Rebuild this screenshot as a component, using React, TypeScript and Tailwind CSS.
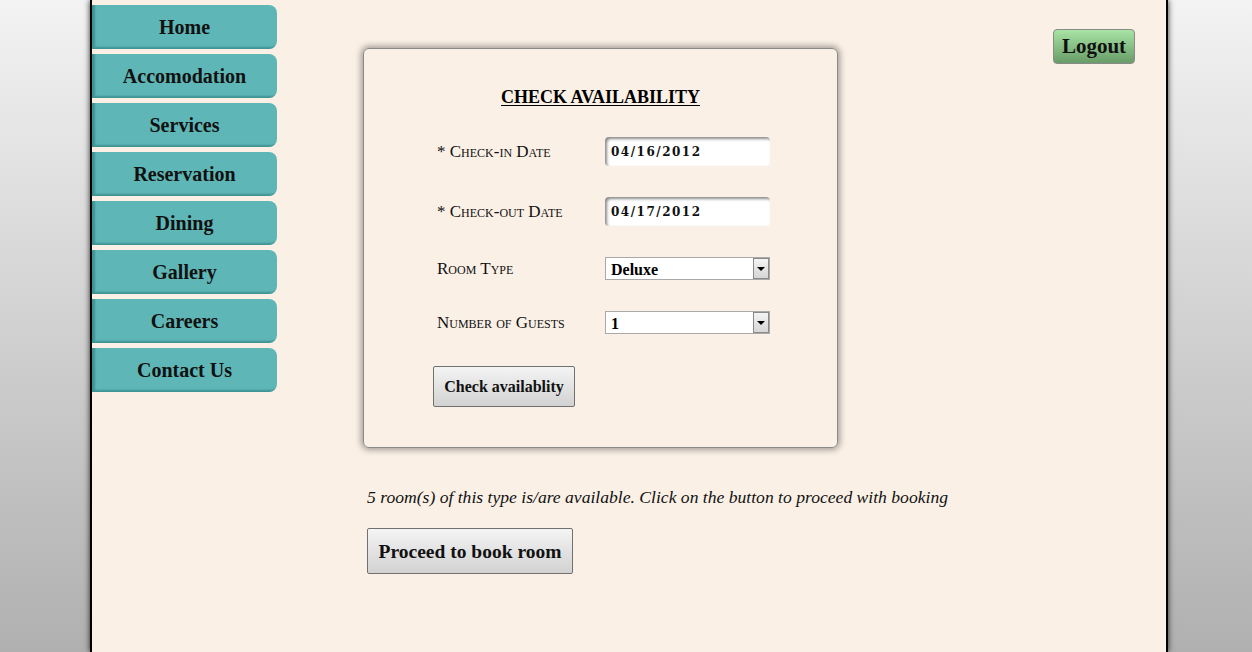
const navItems = [
  "Home",
  "Accomodation",
  "Services",
  "Reservation",
  "Dining",
  "Gallery",
  "Careers",
  "Contact Us",
];

const serif = "font-['Liberation_Serif','Times_New_Roman',serif]";

const SelectBox = ({ value, options }: { value: string; options: string[] }) => (
  <div className="relative w-[165px] h-[23px]">
    <select
      defaultValue={value}
      className={`${serif} appearance-none w-full h-full bg-white border border-[#a9a9a9] pl-[5px] text-[16px] font-bold text-black outline-none`}
    >
      {options.map((o) => (
        <option key={o}>{o}</option>
      ))}
    </select>
    {/* dropdown arrow box */}
    <div className="pointer-events-none absolute right-[1px] top-[1px] w-[16px] h-[21px] border border-[#8a8a8a] bg-gradient-to-b from-[#f4f4f4] to-[#d6d6d6] flex items-center justify-center">
      <svg width="8" height="4" viewBox="0 0 8 4">
        <path d="M0 0h8L4 4z" fill="#000" />
      </svg>
    </div>
  </div>
);

const DateInput = ({ value }: { value: string }) => (
  <input
    defaultValue={value}
    className="w-[165px] h-[29px] bg-white rounded-[4px] shadow-[inset_2px_2px_3px_#8a8a8a] pl-[6px] pt-[1px] text-[12px] font-bold tracking-[1.5px] font-['DejaVu_Serif',serif] text-[#111] outline-none"
  />
);

const FormRow = ({ label, className = "", children }: { label: string; className?: string; children: React.ReactNode }) => (
  <div className={`flex items-center ${className}`}>
    <span className={`${serif} w-[168px] text-[17px] [font-variant:small-caps] text-[#111]`}>{label}</span>
    {children}
  </div>
);

export default function App() {
  return (
    <div className="min-h-screen h-[652px] bg-gradient-to-b from-[#f3f3f3] to-[#b0b0b0] overflow-hidden">
      <div className="ml-[90px] w-[1078px] h-full bg-[#faf0e6] border-x-2 border-black shadow-[0_0_6px_rgba(0,0,0,0.8)] flex">
        {/* Side navigation */}
        <nav className="w-[185px] pt-[5px] flex flex-col gap-[5px] shrink-0">
          {navItems.map((item) => (
            <a
              key={item}
              href="#"
              className={`${serif} h-[44px] flex items-center justify-center bg-[#5fb6b6] rounded-r-[8px] shadow-[inset_3px_-2px_2px_rgba(0,80,80,0.35)] text-[20px] font-bold text-[#111]`}
            >
              {item}
            </a>
          ))}
        </nav>

        <main className="flex-1 flex">
          <div className="ml-[86px] pt-[48px]">
            {/* Availability card */}
            <div className="w-[475px] h-[400px] rounded-[6px] border border-[#8a8a8a] shadow-[0_0_6px_2px_rgba(0,0,0,0.35)] pt-[38px] pl-[73px]">
              <h2 className={`${serif} text-center pr-[73px] text-[18px] leading-[20px] font-bold underline underline-offset-[2px] text-black`}>
                CHECK AVAILABILITY
              </h2>
              <div className="mt-[30px] flex flex-col">
                <FormRow label="* Check-in Date" className="h-[29px]">
                  <DateInput value="04/16/2012" />
                </FormRow>
                <FormRow label="* Check-out Date" className="h-[29px] mt-[31px]">
                  <DateInput value="04/17/2012" />
                </FormRow>
                <FormRow label="Room Type" className="h-[23px] mt-[31px]">
                  <SelectBox value="Deluxe" options={["Deluxe", "Standard", "Suite"]} />
                </FormRow>
                <FormRow label="Number of Guests" className="h-[23px] mt-[31px]">
                  <SelectBox value="1" options={["1", "2", "3", "4"]} />
                </FormRow>
                <button
                  className={`${serif} -ml-[4px] mt-[32px] w-[142px] h-[41px] rounded-[2px] border border-[#707070] bg-gradient-to-b from-[#f4f4f4] to-[#d2d2d2] text-[16px] font-bold text-[#111]`}
                >
                  Check availablity
                </button>
              </div>
            </div>

            <p className={`${serif} mt-[36px] ml-[4px] text-[17.6px] italic text-[#111] whitespace-nowrap`}>
              5 room(s) of this type is/are available. Click on the button to proceed with booking
            </p>
            <button
              className={`${serif} mt-[18px] ml-[4px] w-[206px] h-[46px] rounded-[2px] border border-[#707070] bg-gradient-to-b from-[#f4f4f4] to-[#d2d2d2] text-[19.5px] font-bold text-[#111]`}
            >
              Proceed to book room
            </button>
          </div>

          <div className="ml-auto mr-[31px] mt-[29px]">
            <button
              className={`${serif} w-[82px] h-[35px] pt-[1px] rounded-[4px] border border-[#8a8a8a] bg-gradient-to-b from-[#a8e4a4] to-[#689c68] text-[21px] font-bold text-[#111]`}
            >
              Logout
            </button>
          </div>
        </main>
      </div>
    </div>
  );
}
